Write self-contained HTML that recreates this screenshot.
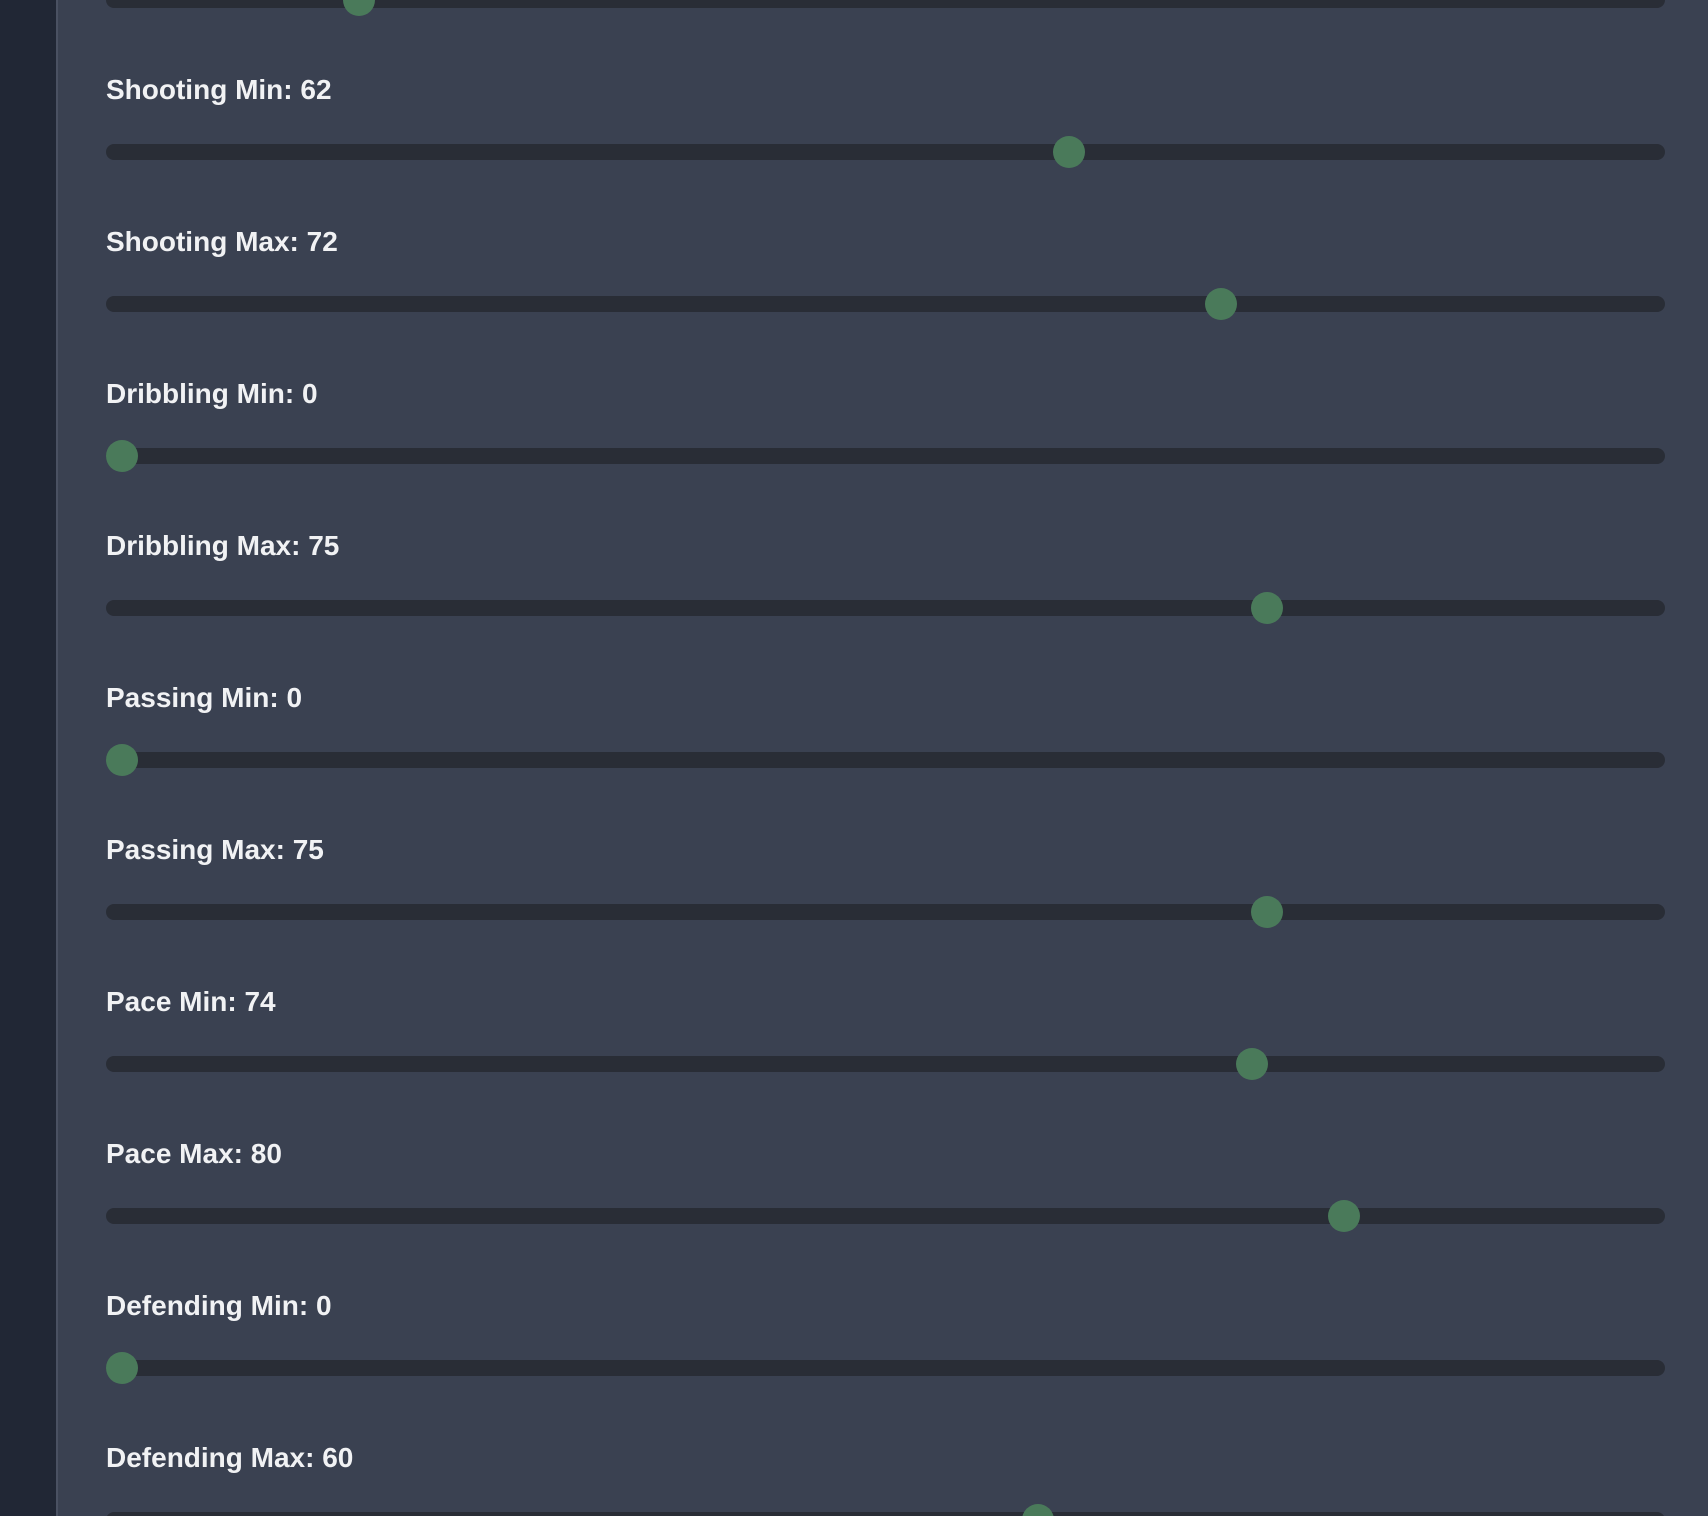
<!DOCTYPE html>
<html><head><style>
html,body{margin:0;padding:0;width:1708px;height:1516px;overflow:hidden;background:#3a4151;font-family:"Liberation Sans",Arial,sans-serif;}
#wrap{position:relative;width:1708px;height:1516px;overflow:hidden;}
.sb{position:absolute;left:0;top:0;width:56px;height:1516px;background:#212735;border-right:2px solid #4a5162;}
.lbl{position:absolute;left:0;font-size:28px;font-weight:bold;color:#f1f2f4;white-space:nowrap;line-height:1;}
.trk{position:absolute;left:106px;width:1559px;height:16px;border-radius:8px;background:#292d36;}
.th{position:absolute;width:32px;height:32px;border-radius:50%;background:#4a7a5a;}
</style></head><body>
<div id="wrap">
<div class="sb"></div>
<div id="c"></div>
</div>
<script>
var items=[["",15.5],["Shooting Min: 62",62],["Shooting Max: 72",72],["Dribbling Min: 0",0],["Dribbling Max: 75",75],["Passing Min: 0",0],["Passing Max: 75",75],["Pace Min: 74",74],["Pace Max: 80",80],["Defending Min: 0",0],["Defending Max: 60",60]];
var h="";
items.forEach(function(it,i){
 var cy=Math.round(i*152);
 if(it[0]) h+='<div class="lbl" style="left:106px;top:'+(cy-76)+'px">'+it[0]+'</div>';
 h+='<div class="trk" style="top:'+(cy-8)+'px"></div>';
 h+='<div class="th" style="left:'+(106+it[1]/100*1527)+'px;top:'+(cy-16)+'px"></div>';
});
document.getElementById('c').innerHTML=h;
</script>
</body></html>
